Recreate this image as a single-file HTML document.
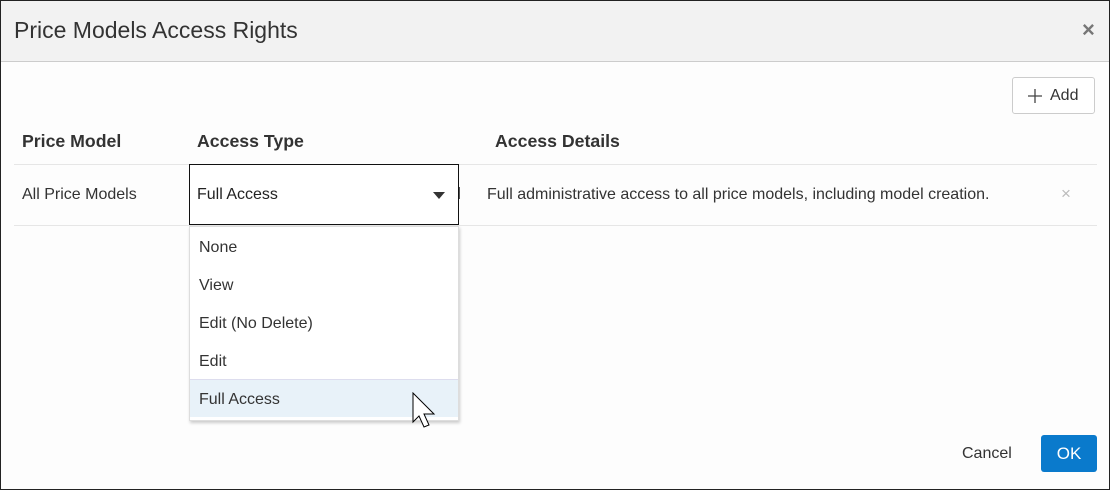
<!DOCTYPE html>
<html><head><style>
*{margin:0;padding:0;box-sizing:border-box}
body{width:1110px;height:490px;position:relative;font-family:"Liberation Sans",sans-serif;background:#fff;overflow:hidden}
.frame{position:absolute;left:0;top:0;width:1110px;height:490px;border:1px solid #222;background:#fdfdfd}
.hdr{position:absolute;left:1px;top:1px;width:1108px;height:61px;background:#f2f2f2;border-bottom:1px solid #ccc}
.a{position:absolute;white-space:nowrap}
.t{font-size:16px;color:#333}
</style></head><body>
<div class="frame"></div>
<div class="hdr"></div>
<div class="a" style="left:14px;top:17px;font-size:23px;color:#333">Price Models Access Rights</div>
<div class="a" style="left:1082px;top:17px;font-size:22px;color:#777;font-weight:bold">×</div>
<div class="a" style="left:1012px;top:77px;width:83px;height:37px;border:1px solid #ccc;border-radius:3px;background:#fff"></div>
<svg class="a" style="left:1028px;top:89px" width="14" height="14" viewBox="0 0 14 14"><path d="M7 0V14M0 7H14" stroke="#444" stroke-width="1.3"/></svg>
<div class="a" style="left:1050px;top:87px;font-size:16px;color:#333">Add</div>
<div class="a" style="left:22px;top:131px;font-size:17.7px;font-weight:bold;color:#333">Price Model</div>
<div class="a" style="left:197px;top:131px;font-size:17.7px;font-weight:bold;color:#333">Access Type</div>
<div class="a" style="left:495px;top:131px;font-size:17.7px;font-weight:bold;color:#333">Access Details</div>
<div class="a" style="left:14px;top:164px;width:1083px;height:1px;background:#e6e6e6"></div>
<div class="a" style="left:14px;top:225px;width:1083px;height:1px;background:#e6e6e6"></div>
<div class="a t" style="left:22px;top:186px">All Price Models</div>
<div class="a" style="left:189px;top:164px;width:270px;height:61px;border:1px solid #111;background:#fff"></div>
<div class="a t" style="left:197px;top:186px;color:#222">Full Access</div>
<div class="a" style="left:433px;top:192px;width:0;height:0;border-left:6px solid transparent;border-right:6px solid transparent;border-top:7px solid #333"></div>
<div class="a" style="left:459px;top:187px;width:1px;height:12px;background:#555"></div>
<div class="a t" style="left:487px;top:186px">Full administrative access to all price models, including model creation.</div>
<div class="a" style="left:1061px;top:184px;font-size:17px;color:#bbb">×</div>
<div class="a" style="left:189px;top:226px;width:270px;height:195px;background:#fff;border:1px solid #ddd;box-shadow:1px 2px 3px rgba(0,0,0,.2)"></div>
<div class="a" style="left:190px;top:379px;width:268px;height:38px;background:#e8f2f9;border-top:1px solid #dde"></div>
<div class="a t" style="left:199px;top:239px">None</div>
<div class="a t" style="left:199px;top:277px">View</div>
<div class="a t" style="left:199px;top:315px">Edit (No Delete)</div>
<div class="a t" style="left:199px;top:353px">Edit</div>
<div class="a t" style="left:199px;top:391px">Full Access</div>
<svg class="a" style="left:412px;top:392px" width="26" height="40" viewBox="0 0 26 40"><path d="M1 1 L1 30 L7 24 L12 35 L17 33 L12 22 L22 22 Z" fill="#fff" stroke="#000" stroke-width="1"/></svg>
<div class="a" style="left:962px;top:445px;font-size:16px;color:#333">Cancel</div>
<div class="a" style="left:1041px;top:435px;width:56px;height:37px;background:#0a7acc;border-radius:3px;color:#fff;font-size:17px;text-align:center;line-height:37px">OK</div>
</body></html>
